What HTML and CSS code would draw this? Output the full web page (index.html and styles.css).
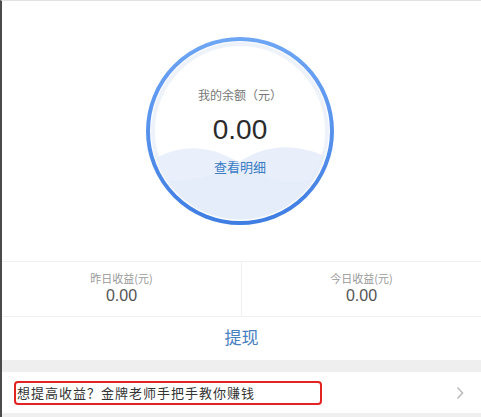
FILE: index.html
```html
<!DOCTYPE html>
<html lang="zh-CN">
<head>
    <meta charset="UTF-8">
    <meta name="viewport" content="width=device-width, initial-scale=1.0">
    <title>我的余额</title>
    <link rel="stylesheet" href="styles.css">
</head>
<body>
    <div class="page">
        <!-- Balance circle -->
        <div class="balance">
            <div class="ring">
                <svg class="ring-bg" width="192" height="192" viewBox="0 0 192 192">
                    <defs>
                        <linearGradient id="ringStroke" x1="0" y1="0" x2="0" y2="1">
                            <stop offset="0" stop-color="#6ea6f6"/>
                            <stop offset="1" stop-color="#3f7de2"/>
                        </linearGradient>
                        <clipPath id="inner">
                            <circle cx="96" cy="96" r="88"/>
                        </clipPath>
                    </defs>
                    <circle cx="96" cy="96" r="87" fill="#fff" stroke="#eef3fb" stroke-width="4"/>
                    <g clip-path="url(#inner)">
                        <path d="M0 130 C30 110 60 106 96 128 C126 148 150 152 192 138 L192 192 L0 192 Z" fill="#e9f0fb"/>
                        <path d="M0 142 C40 152 70 142 100 124 C130 106 160 110 192 126 L192 192 L0 192 Z" fill="#e4ecf9" opacity="0.85"/>
                    </g>
                    <circle cx="96" cy="96" r="92" fill="none" stroke="url(#ringStroke)" stroke-width="4"/>
                </svg>
                <div class="ring-label">我的余额（元）</div>
                <div class="ring-amount">0.00</div>
                <a class="ring-link" href="#">查看明细</a>
            </div>
        </div>

        <!-- Daily income -->
        <div class="stats">
            <div class="stat">
                <div class="stat-label">昨日收益(元)</div>
                <div class="stat-value">0.00</div>
            </div>
            <div class="stat">
                <div class="stat-label">今日收益(元)</div>
                <div class="stat-value">0.00</div>
            </div>
        </div>

        <div class="withdraw">提现</div>

        <div class="gap"></div>

        <!-- Promo row -->
        <div class="promo">
            <span class="promo-text">想提高收益？金牌老师手把手教你赚钱</span>
            <svg class="chevron" width="8" height="14" viewBox="0 0 8 14">
                <path d="M1.5 1.5 L6.5 7 L1.5 12.5" fill="none" stroke="#bdbdbd" stroke-width="1.6"/>
            </svg>
        </div>
        <div class="bottom"></div>
    </div>
</body>
</html>
```

FILE: styles.css
```css
* {
    box-sizing: border-box;
    margin: 0;
    padding: 0;
}

body {
    font-family: "Noto Sans CJK SC", "Noto Sans", sans-serif;
    background-color: #fff;
    width: 481px;
    height: 417px;
    overflow: hidden;
}

.page {
    border-left: 2px solid #4b4b4b;
    border-top: 1px solid #e2e2e2;
    height: 417px;
}

/* Balance circle */
.balance {
    height: 260px;
    display: flex;
    justify-content: center;
    padding-top: 34px;
}

.ring {
    position: relative;
    width: 192px;
    height: 192px;
    margin-left: -3px;
    display: flex;
    flex-direction: column;
    align-items: center;
}

.ring-bg {
    position: absolute;
    left: 0;
    top: 0;
}

.ring-label,
.ring-amount,
.ring-link {
    position: relative;
}

.ring-label {
    margin-top: 51px;
    font-size: 12px;
    color: #777;
    line-height: 18px;
}

.ring-amount {
    margin-top: 10px;
    font-family: "Liberation Sans", Arial, sans-serif;
    font-size: 28px;
    color: #2b2b2b;
    line-height: 32px;
}

.ring-link {
    margin-top: 12px;
    font-size: 13px;
    color: #3b7cc4;
    text-decoration: none;
    line-height: 18px;
}

/* Daily income */
.stats {
    display: flex;
    height: 56px;
    border-top: 1px solid #f0f0f0;
    border-bottom: 1px solid #f0f0f0;
}

.stat {
    flex: 1;
    display: flex;
    flex-direction: column;
    align-items: center;
    padding-top: 8px;
}

.stat + .stat {
    border-left: 1px solid #f0f0f0;
}

.stat-label {
    font-size: 11px;
    color: #999;
    line-height: 16px;
}

.stat-value {
    font-family: "Liberation Sans", Arial, sans-serif;
    font-size: 16px;
    color: #555;
    line-height: 20px;
}

.withdraw {
    height: 43px;
    display: flex;
    justify-content: center;
    align-items: center;
    padding-bottom: 4px;
    font-size: 17px;
    color: #4a7fbf;
}

.gap {
    height: 12px;
    background-color: #efefef;
}

/* Promo row */
.promo {
    height: 41px;
    display: flex;
    align-items: center;
    justify-content: space-between;
    padding: 0 17px 0 12px;
}

.promo-text {
    display: block;
    width: 308px;
    height: 24px;
    border: 2px solid #e32222;
    border-radius: 4px;
    font-size: 13px;
    letter-spacing: 1px;
    color: #333;
    line-height: 20px;
    padding-left: 1px;
}

.bottom {
    height: 4px;
    background-color: #efefef;
}
```
